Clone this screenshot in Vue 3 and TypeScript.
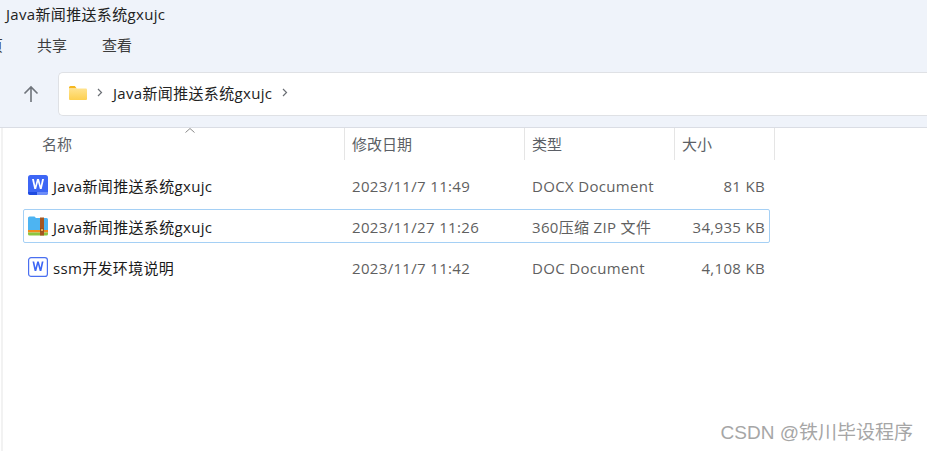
<script setup lang="ts">
interface FileRow {
  name: string
  date: string
  kind: string
  size: string
  icon: 'docx' | 'zip' | 'doc'
  selected?: boolean
}
const rows: FileRow[] = [
  { name: 'Java新闻推送系统gxujc', date: '2023/11/7 11:49', kind: 'DOCX Document', size: '81 KB', icon: 'docx' },
  { name: 'Java新闻推送系统gxujc', date: '2023/11/27 11:26', kind: '360压缩 ZIP 文件', size: '34,935 KB', icon: 'zip', selected: true },
  { name: 'ssm开发环境说明', date: '2023/11/7 11:42', kind: 'DOC Document', size: '4,108 KB', icon: 'doc' },
]
</script>

<template>
  <div class="window">
    <header class="chrome">
      <div class="title">Java新闻推送系统gxujc</div>
      <nav class="menu">
        <span class="cut">主页</span>
        <span class="share">共享</span>
        <span class="view">查看</span>
      </nav>
      <div class="navrow">
        <button class="up" aria-label="up">
          <svg width="18" height="20" viewBox="0 0 18 20" fill="none" stroke="#6f747b" stroke-width="1.6">
            <path d="M9 18V3M2.500 9.500 9 3l6.500 6.500" />
          </svg>
        </button>
        <div class="address">
          <svg class="folder" width="18" height="14" viewBox="0 0 18 14">
            <defs>
              <linearGradient id="fold" x1="0" y1="0" x2="0" y2="1">
                <stop offset="0" stop-color="#ffe38e" />
                <stop offset="1" stop-color="#fdd050" />
              </linearGradient>
            </defs>
            <path d="M0 1.500A1.500 1.500 0 0 1 1.500 0h4.300l2 2.500H0z" fill="#f5b71f" />
            <rect y="2.500" width="18" height="11.500" rx="1" fill="url(#fold)" />
          </svg>
          <svg class="chev" width="6" height="9" viewBox="0 0 6 9" fill="none" stroke="#6b6f75" stroke-width="1.200"><path d="m1 1 3.500 3.500L1 8" /></svg>
          <span class="crumb">Java新闻推送系统gxujc</span>
          <svg class="chev last" width="6" height="9" viewBox="0 0 6 9" fill="none" stroke="#6b6f75" stroke-width="1.200"><path d="m1 1 3.500 3.500L1 8" /></svg>
        </div>
      </div>
    </header>

    <main class="list">
      <div class="head">
        <div class="hc c-name">
          名称
          <svg class="sort" width="10" height="5" viewBox="0 0 10 5" fill="none" stroke="#8a8a8a"><path d="m.5 4.500 4.500-4 4.500 4" /></svg>
        </div>
        <div class="hc c-date">修改日期</div>
        <div class="hc c-kind">类型</div>
        <div class="hc c-size">大小</div>
      </div>
      <div class="rows">
        <div v-for="r in rows" :key="r.name + r.icon" class="row" :class="{ selected: r.selected }">
          <div class="cell-name">
            <svg v-if="r.icon === 'docx'" class="ico" width="20" height="20" viewBox="0 0 20 20">
              <rect width="20" height="20" rx="2.500" fill="#3d66f5" />
              <path d="M0 17h9v3H2.500A2.500 2.500 0 0 1 0 17.500z" fill="#1f4be0" />
              <path d="M9 17h11v.5a2.500 2.500 0 0 1-2.500 2.500H9z" fill="#6d8df8" />
              <path d="m4 4 2.300 10h1.800L10 7l1.900 7h1.800L16 4h-1.900l-1.400 6.700L11 4H9L7.300 10.700 5.900 4z" fill="#fff" />
            </svg>
            <svg v-else-if="r.icon === 'zip'" class="ico" width="20" height="20" viewBox="0 0 20 20">
              <path d="M0 2a1.500 1.500 0 0 1 1.500-1.500h5L8 2h10.500A1.500 1.500 0 0 1 20 3.500V14H0z" fill="#4db4f2" />
              <rect y="14" width="20" height="2.500" fill="#f08c1e" />
              <path d="M0 16.500h20V18a1.500 1.500 0 0 1-1.500 1.500h-17A1.500 1.500 0 0 1 0 18z" fill="#8cc63f" />
              <rect x="12" y="1.500" width="4" height="18" fill="#a5561f" />
              <rect x="12.500" y="12.500" width="3" height="3" fill="#e7a95a" stroke="#8a4a18" stroke-width=".8" />
            </svg>
            <svg v-else class="ico" width="20" height="20" viewBox="0 0 20 20">
              <rect x=".6" y=".6" width="18.800" height="18.800" rx="2.500" fill="#fff" stroke="#4a6ff0" stroke-width="1.200" />
              <path d="m4.500 4.500 2.100 9.500h1.700L10 7.500l1.700 6.500h1.700l2.100-9.500h-1.700l-1.300 6.300-1.700-6.300H9.200l-1.700 6.300-1.300-6.300z" fill="#3d66f5" />
            </svg>
            <span class="fname">{{ r.name }}</span>
          </div>
          <div class="cell-date">{{ r.date }}</div>
          <div class="cell-kind">{{ r.kind }}</div>
          <div class="cell-size">{{ r.size }}</div>
        </div>
      </div>
      <div class="mark">CSDN @铁川毕设程序</div>
    </main>
  </div>
</template>

<style>
html, body { margin: 0; background: #fff; }
</style>

<style scoped>
.window {
  width: 927px;
  height: 451px;
  overflow: hidden;
  display: flex;
  flex-direction: column;
  font-family: "Open Sans", "Noto Sans CJK SC", sans-serif;
  font-size: 15px;
  letter-spacing: 0.33px;
  color: #1a1a1a;
}
.chrome {
  height: 128px;
  box-sizing: border-box;
  background: #eff3fa;
  border-bottom: 1px solid #dadde4;
  flex: none;
}
.title {
  height: 30px;
  line-height: 29px;
  padding-left: 6px;
  color: #222;
}
.menu {
  height: 28px;
  display: flex;
  align-items: center;
  color: #3c3c3c;
  overflow: hidden;
}
.cut {
  width: 30px;
  margin-left: -27px;
  flex: none;
  white-space: nowrap;
  letter-spacing: 0;
}
.share { margin-left: 34px; letter-spacing: 0; }
.view { margin-left: 35px; letter-spacing: 0; }
.navrow {
  margin-top: 14px;
  display: flex;
  align-items: center;
}
.up {
  width: 58px;
  height: 44px;
  padding: 0 0 0 3px;
  border: 0;
  background: none;
  display: flex;
  justify-content: center;
  align-items: center;
}
.address {
  flex: 1;
  height: 44px;
  box-sizing: border-box;
  background: #fff;
  border: 1px solid #dfe1e5;
  border-right: 0;
  border-radius: 5px 0 0 5px;
  display: flex;
  align-items: center;
  padding: 0 0 3px 10px;
}
.chev { margin-left: 10px; }
.crumb { margin-left: 10px; color: #222; }
.chev.last { margin-left: 10px; }
.list {
  flex: 1;
  position: relative;
  border-left: 2px solid #f2f2f2;
  margin-left: 1px;
}
.head {
  height: 32px;
  display: flex;
  color: #5b5f66;
  letter-spacing: 0;
}
.hc {
  box-sizing: border-box;
  border-right: 1px solid #e5e5e5;
  padding-left: 7px;
  line-height: 32px;
}
.c-name { width: 342px; padding-left: 39px; position: relative; }
.sort { position: absolute; left: 182px; top: 0; }
.c-date { width: 180px; }
.c-kind { width: 150px; }
.c-size { width: 100px; }
.rows {
  margin-top: 8px;
  display: flex;
  flex-direction: column;
  gap: 7px;
  width: 747px;
  margin-left: 20px;
}
.row {
  height: 34px;
  box-sizing: border-box;
  display: flex;
  align-items: center;
  border: 1px solid transparent;
  color: #5f5f5f;
}
.row.selected { border-color: #a5d0f5; border-radius: 2px; }
.cell-name {
  width: 321px;
  display: flex;
  align-items: center;
  flex: none;
  padding-left: 4px;
  box-sizing: border-box;
  color: #1a1a1a;
}
.ico { flex: none; }
.fname { margin-left: 5px; }
.cell-date { width: 180px; flex: none; padding: 1px 0 0 7px; box-sizing: border-box; }
.cell-kind { width: 150px; flex: none; padding: 1px 0 0 7px; box-sizing: border-box; }
.cell-size { flex: 1; text-align: right; padding: 1px 4px 0 0; }
.mark {
  position: absolute;
  right: 14px;
  bottom: 7px;
  font-family: "Liberation Sans", "Noto Sans CJK SC", sans-serif;
  font-size: 19px;
  letter-spacing: 0;
  color: #a6a6a6;
}
</style>
